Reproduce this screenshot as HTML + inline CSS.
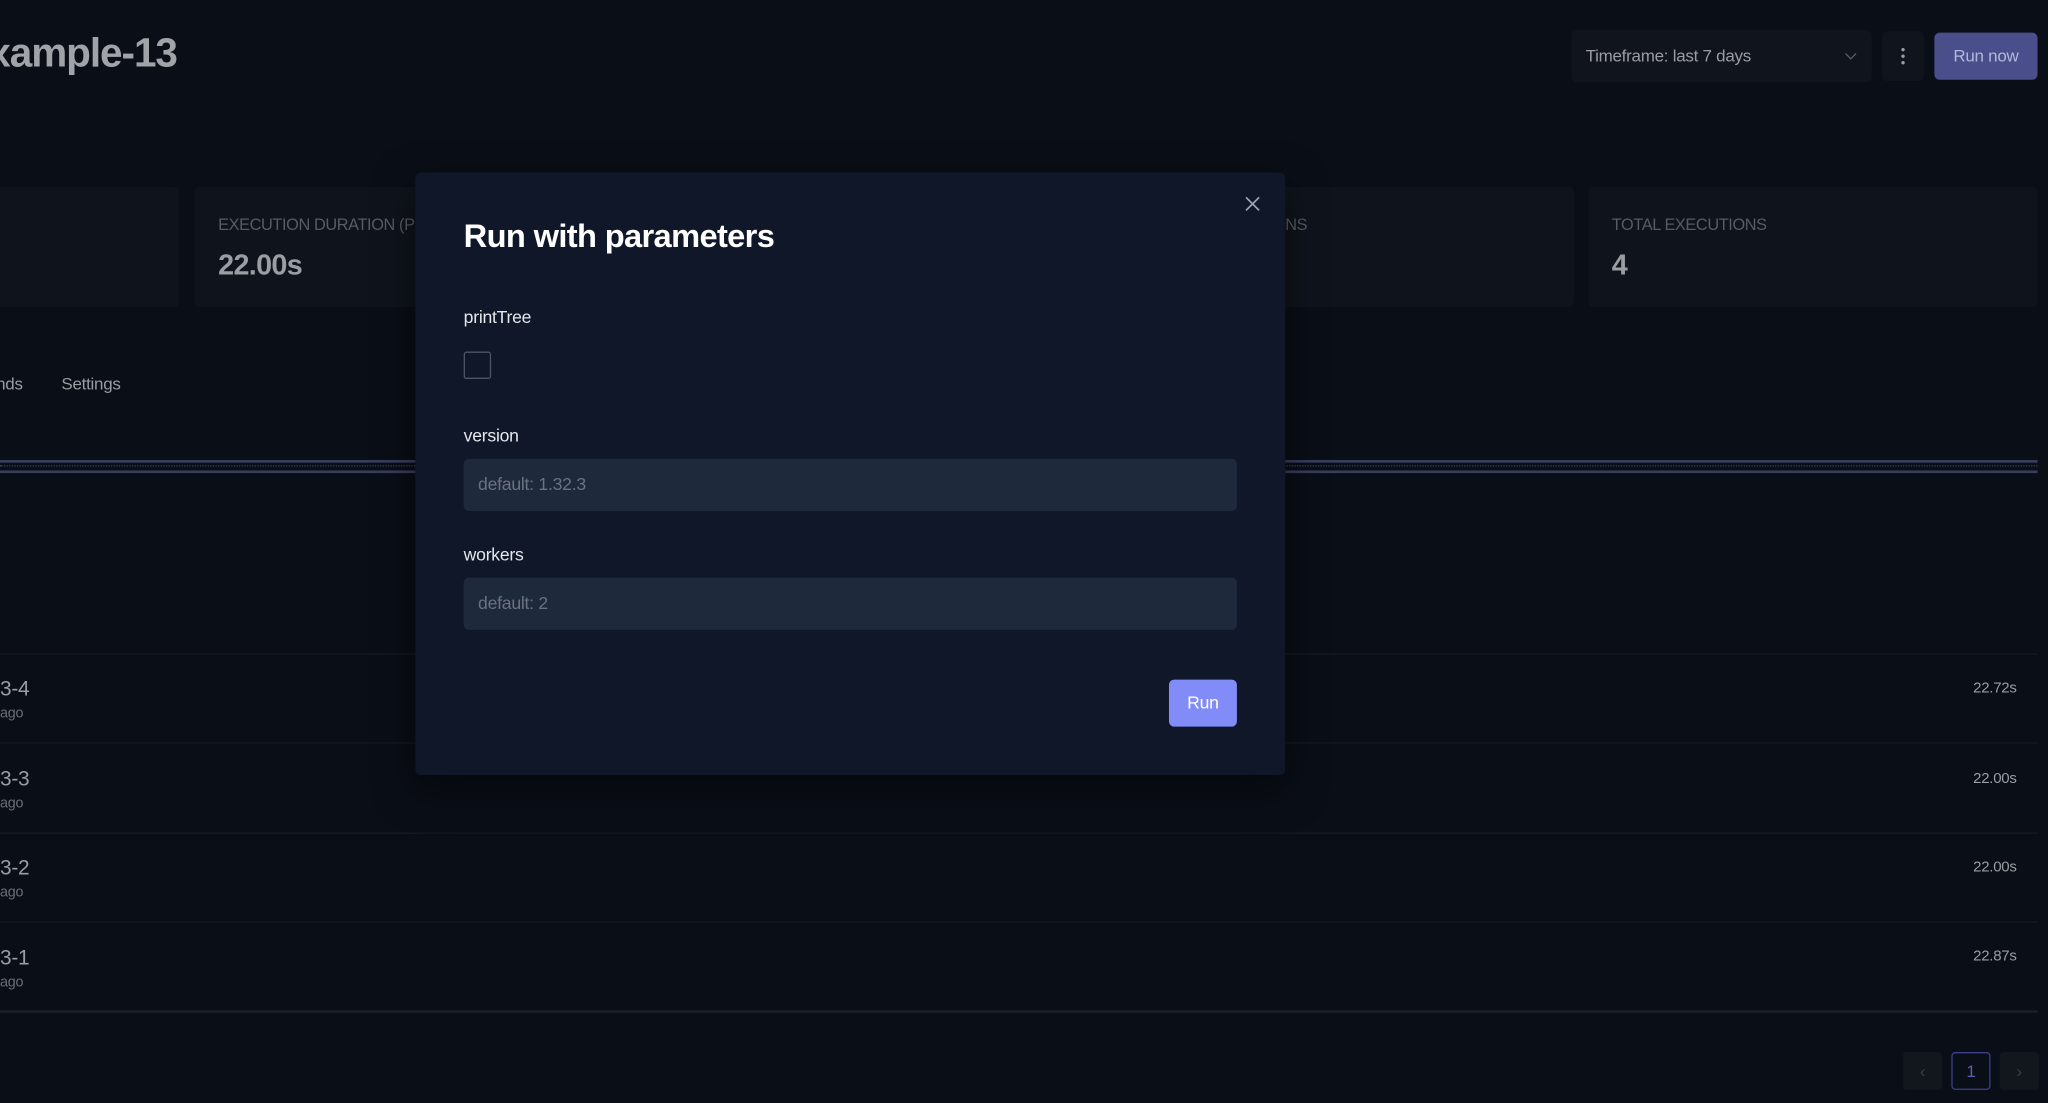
<!DOCTYPE html>
<html><head><style>
html,body{margin:0;padding:0;width:2048px;height:1103px;overflow:hidden;background:#0a0e16;}
#w{position:absolute;left:0;top:0;width:1568px;height:844px;transform:scale(1.30612,1.30687);transform-origin:0 0;font-family:"Liberation Sans",sans-serif;background:#0a0e16;overflow:hidden;letter-spacing:-0.2px}
.a{position:absolute}
.card{position:absolute;top:143px;height:92px;background:#0f141c;border-radius:4px}
.lbl{position:absolute;top:165px;font-size:12.5px;color:#575c63;letter-spacing:-0.3px}
.val{position:absolute;top:190px;font-size:22px;font-weight:bold;color:#9a9da2;letter-spacing:-0.5px}
.row{position:absolute;left:0;width:1560px;height:1px;background:#151a23}
.rid{position:absolute;left:0;font-size:16px;color:#9a9da2}
.ago{position:absolute;left:0;font-size:11px;color:#6a6e74}
.dur{position:absolute;right:24px;font-size:11.5px;color:#9a9da2}
.inp{position:absolute;left:37px;width:592px;height:40px;background:#1e293b;border-radius:4px;color:#6b7280;font-size:13.5px;line-height:40px;text-indent:11px}
.fl{position:absolute;left:37px;font-size:13.5px;color:#e5e7eb}
</style></head><body><div id="w">
<div class="a" style="left:-9px;top:23px;font-size:31px;font-weight:bold;color:#a0a3a8;letter-spacing:-0.8px">xample-13</div>
<div class="a" style="left:1203px;top:23px;width:230px;height:40px;background:#10151d;border-radius:4px"><span class="a" style="left:11px;top:12px;font-size:13px;color:#9a9ca0">Timeframe: last 7 days</span><svg class="a" style="left:209px;top:15px" width="10" height="10"><path d="M1 3l4 4 4-4" stroke="#5a5e64" fill="none"/></svg></div>
<div class="a" style="left:1441px;top:24px;width:32px;height:38px;background:#10151d;border-radius:4px"><svg class="a" style="left:14px;top:12px" width="4" height="14"><circle cx="2" cy="2" r="1.3" fill="#9a9ca0"/><circle cx="2" cy="7" r="1.3" fill="#9a9ca0"/><circle cx="2" cy="12" r="1.3" fill="#9a9ca0"/></svg></div>
<div class="a" style="left:1481px;top:25px;width:79px;height:36px;background:#4a4f8c;border-radius:4px;color:#b4b7dc;font-size:13px;text-align:center;line-height:36px">Run now</div>
<div class="card" style="left:-10px;width:147px"></div>
<div class="card" style="left:149px;width:300px"></div>
<div class="lbl" style="left:167px">EXECUTION DURATION (P50)</div>
<div class="val" style="left:167px">22.00s</div>
<div class="card" style="left:900px;width:305px"></div>
<div class="lbl" style="left:984px">NS</div>
<div class="card" style="left:1216px;width:344px"></div>
<div class="lbl" style="left:1234px">TOTAL EXECUTIONS</div>
<div class="val" style="left:1234px">4</div>
<div class="a" style="left:-3px;top:286px;font-size:13px;color:#9a9da2">nds</div>
<div class="a" style="left:47px;top:286px;font-size:13px;color:#9a9da2">Settings</div>
<div class="a" style="left:0;top:352px;width:1560px;height:2px;background:#3a3e5e"></div>
<div class="a" style="left:0;top:356px;width:1560px;border-top:1px dotted #3c4062"></div>
<div class="a" style="left:0;top:360px;width:1560px;height:2px;background:#3a3e5e"></div>
<div class="row" style="top:500px"></div><div class="row" style="top:568px"></div><div class="row" style="top:637px"></div><div class="row" style="top:705px"></div><div class="row" style="top:773px;height:2px;background:#1a1f28"></div>
<div class="rid" style="top:519px">3-4</div><div class="ago" style="top:540px">ago</div><div class="dur" style="top:521px">22.72s</div>
<div class="rid" style="top:588px">3-3</div><div class="ago" style="top:609px">ago</div><div class="dur" style="top:590px">22.00s</div>
<div class="rid" style="top:656px">3-2</div><div class="ago" style="top:677px">ago</div><div class="dur" style="top:658px">22.00s</div>
<div class="rid" style="top:725px">3-1</div><div class="ago" style="top:746px">ago</div><div class="dur" style="top:726px">22.87s</div>
<div class="a" style="left:1457px;top:805px;width:30px;height:29px;background:#12161d;border-radius:3px;color:#3a3e44;text-align:center;line-height:29px;font-size:13px">&lsaquo;</div>
<div class="a" style="left:1494px;top:805px;width:28px;height:27px;border:1px solid #3a3f8a;border-radius:3px;color:#5a5fb0;text-align:center;line-height:27px;font-size:13px">1</div>
<div class="a" style="left:1531px;top:805px;width:30px;height:29px;background:#12161d;border-radius:3px;color:#3a3e44;text-align:center;line-height:29px;font-size:13px">&rsaquo;</div>
<div class="a" style="left:318px;top:132px;width:666px;height:461px;background:#0f1729;border-radius:4px;box-shadow:0 10px 30px rgba(0,0,0,.5)">
<svg class="a" style="left:635px;top:18px" width="12" height="12"><path d="M1 1l10 10M11 1L1 11" stroke="#9ca3af" stroke-width="1.3"/></svg>
<div class="a" style="left:37px;top:35px;font-size:25px;font-weight:bold;color:#fff;letter-spacing:-0.5px">Run with parameters</div>
<div class="fl" style="top:103px">printTree</div>
<div class="a" style="left:37px;top:137px;width:19px;height:19px;border:1.5px solid #4b5563;border-radius:2px"></div>
<div class="fl" style="top:194px">version</div>
<div class="inp" style="top:219px">default: 1.32.3</div>
<div class="fl" style="top:285px">workers</div>
<div class="inp" style="top:310px">default: 2</div>
<div class="a" style="left:577px;top:388px;width:52px;height:36px;background:#818cf8;border-radius:4px;color:#fff;font-size:13.5px;text-align:center;line-height:36px">Run</div>
</div>
</div></body></html>
